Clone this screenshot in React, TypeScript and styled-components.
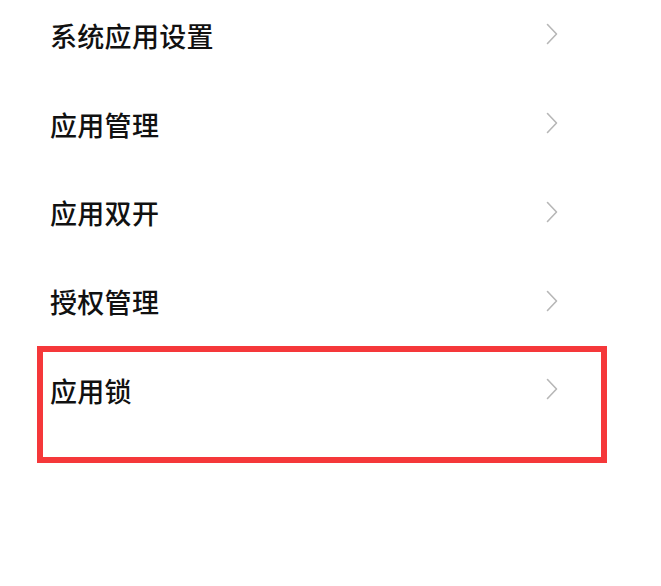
import styled, { createGlobalStyle } from "styled-components"

const GlobalStyle = createGlobalStyle`
  html, body {
    margin: 0;
    padding: 0;
    background: #ffffff;
  }
  body {
    font-family: "Noto Sans CJK SC", "Noto Sans", sans-serif;
  }
`

const Page = styled.div`
  width: 661px;
  height: 586px;
  background: #ffffff;
  overflow: hidden;
`

const List = styled.div`
  display: flex;
  flex-direction: column;
  margin-top: -9px;
`

const Row = styled.div`
  position: relative;
  height: 88.75px;
  display: flex;
  align-items: center;
  justify-content: space-between;
  padding-left: 50px;
  padding-right: 103px;
  box-sizing: border-box;
`

const Label = styled.span`
  font-size: 27px;
  font-weight: 500;
  color: #111111;
  letter-spacing: 0.3px;
`

const Arrow = styled.svg`
  margin-bottom: 2px;
`

const Highlight = styled.div`
  position: absolute;
  left: 37px;
  top: 0;
  width: 570px;
  height: 117px;
  border: 6.5px solid #f5383a;
  box-sizing: border-box;
  pointer-events: none;
`

const Chevron = () => (
  <Arrow width="12" height="22" viewBox="0 0 12 22" fill="none">
    <path d="M1.5 1.5 L10.5 11 L1.5 20.5" stroke="#b7b7b7" strokeWidth="1.6" strokeLinecap="round" strokeLinejoin="round" />
  </Arrow>
)

const items = ["系统应用设置", "应用管理", "应用双开", "授权管理", "应用锁"]

export default function App() {
  return (
    <Page>
      <GlobalStyle />
      <List>
        {items.map((item, i) => (
          <Row key={item}>
            <Label>{item}</Label>
            <Chevron />
            {i === items.length - 1 && <Highlight />}
          </Row>
        ))}
      </List>
    </Page>
  )
}
